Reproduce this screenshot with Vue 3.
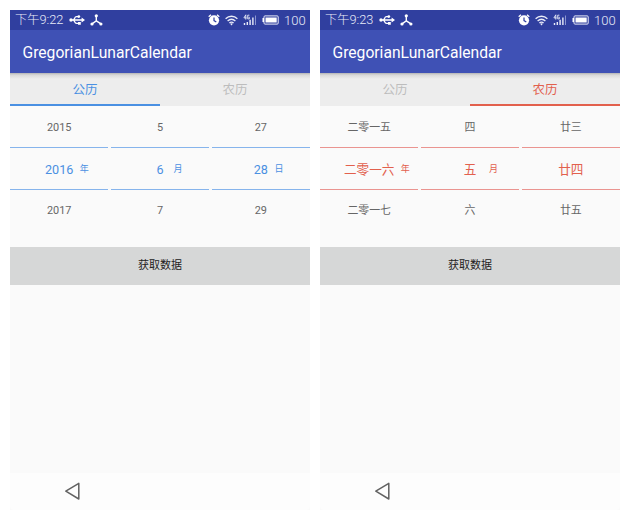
<script setup>
const phones = [
  {
    theme: 'solar',
    time: '9:22',
    active: 0,
    columns: [
      { prev: '2015', value: '2016', next: '2017', unit: '年' },
      { prev: '5', value: '6', next: '7', unit: '月' },
      { prev: '27', value: '28', next: '29', unit: '日' },
    ],
  },
  {
    theme: 'lunar',
    time: '9:23',
    active: 1,
    columns: [
      { prev: '二零一五', value: '二零一六', next: '二零一七', unit: '年' },
      { prev: '四', value: '五', next: '六', unit: '月' },
      { prev: '廿三', value: '廿四', next: '廿五', unit: '' },
    ],
  },
]
const tabs = ['公历', '农历']
</script>

<template>
  <main class="board">
    <section v-for="phone in phones" :key="phone.theme" class="phone" :class="phone.theme">
      <header class="status">
        <span class="clock"><span class="noon">下午</span>{{ phone.time }}</span>
        <svg class="usb" width="16" height="12" viewBox="0 0 16 12" fill="none" stroke="#fff" stroke-width="1.3">
          <path d="M2 6H14M4 6C5.8 6 5.2 2.6 7.5 2.6H10M4 6C5.8 6 5.2 9.4 7.5 9.4H10.5" />
          <circle cx="2" cy="6" r="1.7" fill="#fff" stroke="none" />
          <circle cx="9.8" cy="2.6" r="1.4" fill="#fff" stroke="none" />
          <path d="M9 8h2.8v2.8H9zM12.6 3.6L16 6L12.6 8.4z" fill="#fff" stroke="none" />
        </svg>
        <svg class="node" width="13" height="12" viewBox="0 0 13 12" fill="none" stroke="#fff" stroke-width="1.4">
          <path d="M6.3 2V6.8L2 9.9M6.3 6.8L11 9.9" />
          <g fill="#fff" stroke="none">
            <circle cx="6.3" cy="1.8" r="1.6" /><circle cx="2" cy="10" r="1.6" /><circle cx="10.9" cy="10" r="1.6" />
          </g>
        </svg>
        <span class="spacer"></span>
        <svg class="alarm" width="12" height="12" viewBox="0 0 12 12">
          <circle cx="6" cy="6.3" r="5.1" fill="#fff" />
          <path d="M.7 2.8L3 .8M11.3 2.8L9 .8" stroke="#fff" stroke-width="1.3" />
          <path d="M6 3.4V6.6L8.3 8" fill="none" stroke="#303f9f" stroke-width="1.2" />
        </svg>
        <svg class="wifi" width="13" height="11" viewBox="0 0 13 11" fill="none" stroke="#e9ebf8" stroke-width="1.3">
          <path d="M.6 3.8C4 .4 9 .4 12.4 3.8M2.6 6C5 3.8 8 3.8 10.4 6M4.4 8C5.8 6.8 7.2 6.8 8.6 8" />
          <path d="M5.1 8.8L6.5 10.4L7.9 8.8C7 8.1 6 8.1 5.1 8.8z" fill="#e9ebf8" stroke="none" />
        </svg>
        <svg class="signal" width="14" height="12" viewBox="0 0 14 12">
          <path d="M.8 9h1.4v2H.8zM3.6 8h1.4v3H3.6zM6.4 5.8h1.4V11H6.4zM9.2 3.6h1.4V11H9.2z" fill="#e9ebf8" />
          <path d="M12.5 1.5V11" stroke="#8c96d0" stroke-width="1" />
          <path d="M2.8 5.6V.8L.9 3.9H3.6M6.4 1.2H4.7V4.9H6.3V3.2H5.5" fill="none" stroke="#e9ebf8" stroke-width=".9" />
        </svg>
        <svg class="battery" width="17" height="10" viewBox="0 0 17 10">
          <rect x="2" y=".9" width="14.2" height="8.2" rx="1" fill="none" stroke="#e9ebf8" />
          <path d="M3.5 2.4H14.7V7.6H3.5zM.5 3H2V7H.5z" fill="#fff" />
        </svg>
        <span class="percent">100</span>
      </header>
      <h1 class="title">GregorianLunarCalendar</h1>
      <nav class="tabs">
        <span v-for="(tab, i) in tabs" :key="tab" class="tab" :class="{ active: i === phone.active }">{{ tab }}</span>
      </nav>
      <div class="picker">
        <div v-for="col in phone.columns" :key="col.unit" class="column">
          <div class="row prev">{{ col.prev }}</div>
          <div class="row chosen">
            <span class="value">{{ col.value }}</span>
            <span class="unit">{{ col.unit }}</span>
          </div>
          <div class="row next">{{ col.next }}</div>
        </div>
      </div>
      <button class="fetch">获取数据</button>
      <footer class="navbar">
        <svg width="16" height="18" viewBox="0 0 16 18">
          <path d="M.8 9.2L13.8 1.4V17z" fill="none" stroke="#626262" stroke-width="1.5" stroke-linejoin="round" />
        </svg>
      </footer>
    </section>
  </main>
</template>

<style>
body {
  background: #fff;
}
</style>

<style scoped>
.board {
  display: flex;
  gap: 10px;
  padding: 10px;
  height: 520px;
  box-sizing: border-box;
  font-family: Roboto, "Noto Sans CJK SC", sans-serif;
}
.phone {
  width: 300px;
  height: 500px;
  display: flex;
  flex-direction: column;
  background: #fafafa;
  overflow: hidden;
}
.solar {
  --accent: #4a90e2;
  --line: #86b4ec;
}
.lunar {
  --accent: #e2604d;
  --line: #ea9490;
}
.status {
  display: flex;
  align-items: center;
  height: 20px;
  flex: none;
  padding: 0 5px;
  box-sizing: border-box;
  background: #303f9f;
  color: #e9ebf8;
  font-size: 13px;
  font-weight: 300;
  line-height: 20px;
}
.clock {
  width: 54px;
  font-size: 12.8px;
  white-space: nowrap;
}
.noon {
  font-size: 12.2px;
}
.node {
  margin-left: 5px;
}
.spacer {
  flex: 1;
}
.wifi {
  margin-left: 5px;
}
.signal {
  margin-left: 5px;
}
.battery {
  margin-left: 5px;
}
.percent {
  margin-left: 5px;
  width: 21px;
  padding-top: 1px;
}
.title {
  height: 43px;
  flex: none;
  margin: 0;
  padding-left: 12.5px;
  background: #3f51b5;
  color: #fff;
  font-size: 15.65px;
  font-weight: 400;
  line-height: 45px;
}
.tabs {
  display: flex;
  height: 33px;
  flex: none;
  background: linear-gradient(#b4b4b4, #d9d9d9 2px, #ededed 6px);
}
.tab {
  flex: 1;
  box-sizing: border-box;
  text-align: center;
  font-size: 12.5px;
  line-height: 33px;
  color: #bdbdbd;
}
.tab.active {
  color: var(--accent);
  border-bottom: 2px solid var(--accent);
}
.picker {
  display: flex;
  gap: 2.5px;
  height: 141px;
  flex: none;
}
.column {
  flex: 1 1 0;
  color: #666;
  font-size: 10.9px;
  text-align: center;
}
.row {
  height: 41px;
  line-height: 43px;
}
.row.next {
  line-height: 41px;
}
.row.chosen {
  display: grid;
  grid-template-columns: 1fr auto 1fr;
  border-top: 1px solid var(--line);
  border-bottom: 1px solid var(--line);
  color: var(--accent);
  font-size: 12.6px;
}
.value {
  grid-column: 2;
  min-width: 14px;
}
.lunar .value {
  min-width: 25px;
}
.unit {
  font-size: 9px;
  text-align: left;
  padding-left: 6.5px;
}
.fetch {
  height: 38px;
  flex: none;
  border: 0;
  padding: 0;
  background: #d6d7d7;
  color: #222;
  font: inherit;
  font-size: 11px;
  line-height: 38px;
}
.navbar {
  height: 37px;
  flex: none;
  margin-top: auto;
  box-sizing: border-box;
  padding: 9px 0 0 55px;
  background: #fdfdfd;
  border-radius: 0 0 4px 4px;
}
</style>
